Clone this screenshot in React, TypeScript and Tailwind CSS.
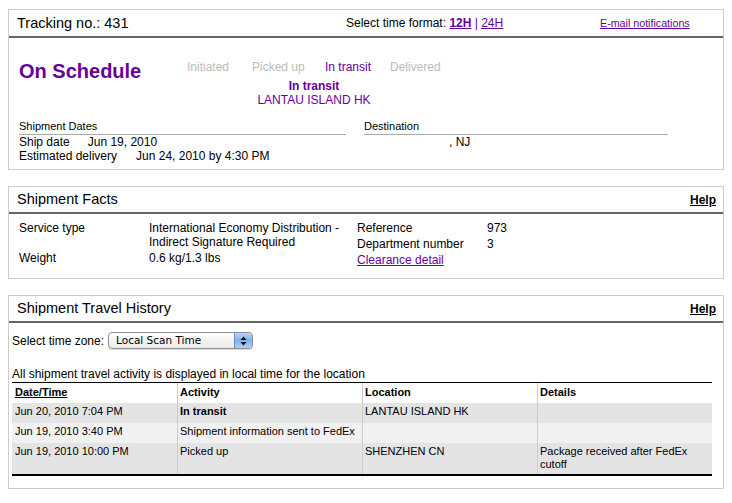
const PURPLE = "#660099";

function Panel({
  title,
  help,
  children,
}: {
  title: string;
  help?: boolean;
  children: React.ReactNode;
}) {
  return (
    <div className="mt-[16px] w-[716px] border border-[#cccccc] bg-white">
      <div className="flex h-[27px] items-center justify-between border-b-2 border-[#666666] pl-[8px] pr-[7px]">
        <div className="text-[14.5px] leading-[17px]">{title}</div>
        {help && <div className="text-[12px] font-bold underline leading-[14px]">Help</div>}
      </div>
      {children}
    </div>
  );
}

function SelectBox() {
  return (
    <div className="flex h-[17px] w-[145px] overflow-hidden rounded-[4px] border border-[#8e8e8e] bg-gradient-to-b from-white to-[#e9e9e9] shadow-[0_1px_1px_rgba(0,0,0,0.15)]">
      <div className="flex-1 pl-[7px] font-['DejaVu_Sans',sans-serif] text-[10.5px] leading-[15px] text-black">
        Local Scan Time
      </div>
      <div className="flex w-[18px] items-center justify-center border-l border-[#6d8fbf] bg-gradient-to-b from-[#b9d6f7] via-[#7fb2ec] to-[#a9d0fa]">
        <svg width="7" height="10" viewBox="0 0 7 10">
          <path d="M3.5 0.5 L6.5 4 L0.5 4 Z" fill="#111" />
          <path d="M3.5 9.5 L6.5 6 L0.5 6 Z" fill="#111" />
        </svg>
      </div>
    </div>
  );
}

const rows = [
  { date: "Jun 20, 2010 7:04 PM", activity: "In transit", bold: true, loc: "LANTAU ISLAND HK", details: "", bg: "bg-[#e4e4e4]", h: "h-[20px]" },
  { date: "Jun 19, 2010 3:40 PM", activity: "Shipment information sent to FedEx", bold: false, loc: "", details: "", bg: "bg-[#f1f1f1]", h: "h-[20px]" },
  { date: "Jun 19, 2010 10:00 PM", activity: "Picked up", bold: false, loc: "SHENZHEN CN", details: "Package received after FedEx cutoff", bg: "bg-[#e4e4e4]", h: "h-[31px]" },
];

export default function App() {
  return (
    <div className="min-h-[503px] w-[732px] bg-white pl-[8px] pt-[9px] font-['Liberation_Sans',Arial,sans-serif] text-[12px] text-black">
      {/* Panel 1 */}
      <div className="w-[716px] border border-[#cccccc] bg-white">
        <div className="flex h-[28px] items-center border-b-2 border-[#666666] pl-[8px]">
          <div className="w-[329px] text-[14.5px] leading-[17px]">Tracking no.: 431</div>
          <div className="w-[254px] leading-[14px]">
            Select time format:{" "}
            <span className="font-bold underline" style={{ color: PURPLE }}>12H</span>
            <span style={{ color: PURPLE }}> | </span>
            <span className="underline" style={{ color: PURPLE }}>24H</span>
          </div>
          <div className="text-[10.7px] leading-[12px] underline" style={{ color: PURPLE }}>
            E-mail notifications
          </div>
        </div>
        <div className="pb-[6px] pl-[10px] pt-[22px]">
          <div className="flex">
            <div className="w-[168px] text-[20px] font-bold leading-[23px]" style={{ color: PURPLE }}>
              On Schedule
            </div>
            <div>
              <div className="flex leading-[14px]">
                <div className="w-[65px] text-[#bbbbbb]">Initiated</div>
                <div className="w-[73px] text-[#bbbbbb]">Picked up</div>
                <div className="w-[65px]" style={{ color: PURPLE }}>In transit</div>
                <div className="text-[#bbbbbb]">Delivered</div>
              </div>
              <div className="ml-[47px] mt-[5px] w-[160px] text-center leading-[14px]" style={{ color: PURPLE }}>
                <div className="font-bold">In transit</div>
                <div>LANTAU ISLAND HK</div>
              </div>
            </div>
          </div>
          <div className="mt-[12px] flex">
            <div className="w-[327px]">
              <div className="h-[16px] border-b border-[#aaaaaa] text-[11px] leading-[15px]">Shipment Dates</div>
              <div className="leading-[14px]">
                <span className="mr-[18px]">Ship date</span>Jun 19, 2010
              </div>
              <div className="leading-[14px]">
                <span className="mr-[19px]">Estimated delivery</span>Jun 24, 2010 by 4:30 PM
              </div>
            </div>
            <div className="ml-[18px] w-[304px]">
              <div className="h-[16px] border-b border-[#aaaaaa] text-[11px] leading-[15px]">Destination</div>
              <div className="pl-[85px] leading-[14px]">, NJ</div>
            </div>
          </div>
        </div>
      </div>

      {/* Panel 2 */}
      <Panel title="Shipment Facts" help>
        <div className="flex h-[64px] pl-[10px]">
          <div className="w-[338px] pt-[7px] leading-[14px]">
            <div className="flex">
              <div className="w-[130px]">Service type</div>
              <div className="w-[208px]">
                International Economy Distribution -<br />
                Indirect Signature Required
              </div>
            </div>
            <div className="mt-[2px] flex">
              <div className="w-[130px]">Weight</div>
              <div>0.6 kg/1.3 lbs</div>
            </div>
          </div>
          <div className="pt-[6px] leading-[16px]">
            <div className="flex">
              <div className="w-[130px]">Reference</div>
              <div>973</div>
            </div>
            <div className="flex">
              <div className="w-[130px]">Department number</div>
              <div>3</div>
            </div>
            <div className="underline" style={{ color: PURPLE }}>Clearance detail</div>
          </div>
        </div>
      </Panel>

      {/* Panel 3 */}
      <Panel title="Shipment Travel History" help>
        <div className="pb-[12px] pl-[3px] pt-[9px]">
          <div className="flex h-[17px] items-center">
            <div className="mr-[4px] leading-[14px]">Select time zone:</div>
            <SelectBox />
          </div>
          <div className="mt-[18px] text-[12px] leading-[14px]">
            All shipment travel activity is displayed in local time for the location
          </div>
          <div className="mt-[1px] w-[700px] border-b-2 border-t border-black text-[11px] leading-[13px]">
            <div className="grid h-[20px] grid-cols-[165px_185px_175px_175px] bg-white font-bold">
              <div className="pl-[3px] pt-[3px] underline">Date/Time</div>
              <div className="border-l border-[#cccccc] pl-[2px] pt-[3px]">Activity</div>
              <div className="border-l border-[#cccccc] pl-[2px] pt-[3px]">Location</div>
              <div className="border-l border-[#cccccc] pl-[2px] pt-[3px]">Details</div>
            </div>
            {rows.map((r) => (
              <div key={r.date} className={`grid grid-cols-[165px_185px_175px_175px] ${r.bg} ${r.h}`}>
                <div className="pl-[3px] pt-[2px]">{r.date}</div>
                <div className={`border-l border-[#cccccc] pl-[2px] pt-[2px] ${r.bold ? "font-bold" : ""}`}>{r.activity}</div>
                <div className="border-l border-[#cccccc] pl-[2px] pt-[2px]">{r.loc}</div>
                <div className="border-l border-[#cccccc] pl-[2px] pr-[8px] pt-[2px]">{r.details}</div>
              </div>
            ))}
          </div>
        </div>
      </Panel>
    </div>
  );
}
